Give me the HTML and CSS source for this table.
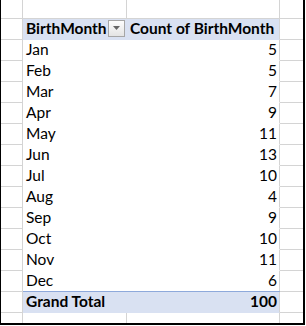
FILE: index.html
```html
<!DOCTYPE html>
<html>
<head>
<meta charset="utf-8">
<link rel="stylesheet" href="styles.css">
</head>
<body>
<div class="sheet">
  <div class="c"></div><div class="c"></div><div class="c"></div><div class="c d"></div>

  <div class="c"></div>
  <div class="c p pb hd hdb"><span>BirthMonth</span><span class="dd"><svg width="7" height="4" viewBox="0 0 7 4"><path d="M0 0h7L3.5 4z" fill="#666"/></svg></span></div>
  <div class="c p hd">Count of BirthMonth</div>
  <div class="c d"></div>

  <div class="c"></div><div class="c p pb">Jan</div><div class="c p num">5</div><div class="c d"></div>
  <div class="c"></div><div class="c p pb">Feb</div><div class="c p num">5</div><div class="c d"></div>
  <div class="c"></div><div class="c p pb">Mar</div><div class="c p num">7</div><div class="c d"></div>
  <div class="c"></div><div class="c p pb">Apr</div><div class="c p num">9</div><div class="c d"></div>
  <div class="c"></div><div class="c p pb">May</div><div class="c p num">11</div><div class="c d"></div>
  <div class="c"></div><div class="c p pb">Jun</div><div class="c p num">13</div><div class="c d"></div>
  <div class="c"></div><div class="c p pb">Jul</div><div class="c p num">10</div><div class="c d"></div>
  <div class="c"></div><div class="c p pb">Aug</div><div class="c p num">4</div><div class="c d"></div>
  <div class="c"></div><div class="c p pb">Sep</div><div class="c p num">9</div><div class="c d"></div>
  <div class="c"></div><div class="c p pb">Oct</div><div class="c p num">10</div><div class="c d"></div>
  <div class="c"></div><div class="c p pb">Nov</div><div class="c p num">11</div><div class="c d"></div>
  <div class="c"></div><div class="c p pb">Dec</div><div class="c p num">6</div><div class="c d"></div>

  <div class="c"></div><div class="c p pb tot">Grand Total</div><div class="c p num tot">100</div><div class="c d"></div>

  <div class="c last"></div><div class="c last"></div><div class="c last"></div><div class="c d last"></div>
</div>
</body>
</html>
```
FILE: styles.css
```css
* { box-sizing: border-box; }
body { margin: 0; background: #fff; }
.sheet {
  width: 305px;
  height: 325px;
  display: grid;
  grid-template-columns: 22px 104px 153px 23px;
  grid-template-rows: 19px repeat(14, 21px) 10px;
  border-left: 1px solid #000;
  border-right: 2px solid #000;
  border-bottom: 2px solid #000;
  font-family: Lato, "Liberation Sans", sans-serif;
  font-size: 15.5px;
  color: #000;
  overflow: hidden;
}
.c {
  border-right: 1px solid #d4d4d4;
  border-bottom: 1px solid #d4d4d4;
  display: flex;
  align-items: flex-end;
  line-height: 17px;
  padding: 0 3px 2px;
  white-space: nowrap;
}
.d { border-right: 0; }
.last { border-bottom: 0; }
.p { border-bottom-color: transparent; background: #fff; }
.pb { border-right-color: transparent; }
.hd { background: #d9e1f2; font-weight: bold; }
.tot { background: #d9e1f2; font-weight: bold; box-shadow: 0 -1px #8ea9db; }
.num { justify-content: flex-end; padding-right: 2px; }
.hdb { justify-content: space-between; padding-right: 1px; }
.dd {
  width: 17px;
  height: 17px;
  align-self: center;
  border: 1px solid #a6a6a6;
  background: linear-gradient(#fdfdfd, #e4e4e4);
  display: flex;
  align-items: center;
  justify-content: center;
}
.dd svg { display: block; }
```
